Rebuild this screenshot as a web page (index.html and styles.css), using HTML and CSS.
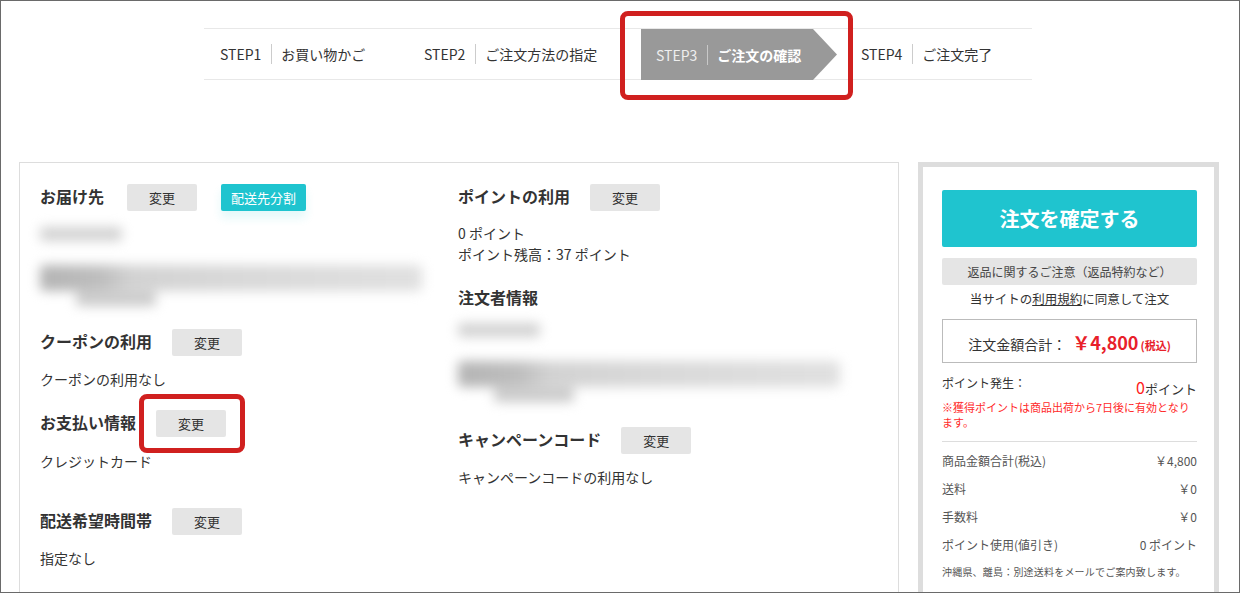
FILE: index.html
```html
<!DOCTYPE html>
<html lang="ja">
<head>
  <meta charset="UTF-8" />
  <meta name="viewport" content="width=device-width, initial-scale=1.0" />
  <title>ご注文の確認</title>
  <link rel="stylesheet" href="styles.css">
</head>
<body>
  <div class="frame">
    <!-- ステップ表示 -->
    <div class="steps">
      <div class="step step-1"><span class="step-no">STEP1</span><span class="step-name">お買い物かご</span></div>
      <div class="step step-2"><span class="step-no">STEP2</span><span class="step-name">ご注文方法の指定</span></div>
      <div class="step step-3 current"><span class="step-no">STEP3</span><span class="step-name">ご注文の確認</span></div>
      <div class="step step-4"><span class="step-no">STEP4</span><span class="step-name">ご注文完了</span></div>
      <div class="mark mark-step"></div>
    </div>

    <div class="main">
      <!-- 注文内容 -->
      <div class="order-info">
        <div class="col">
          <section class="block">
            <div class="block-head">
              <h2>お届け先</h2>
              <a href="#" class="btn-change first">変更</a>
              <a href="#" class="btn-split">配送先分割</a>
            </div>
            <div class="blurred blur-address">
              <div class="bl bl-a"></div>
              <div class="bl bl-b"></div>
              <div class="bl bl-c"></div>
            </div>
          </section>

          <section class="block coupon">
            <div class="block-head">
              <h2>クーポンの利用</h2>
              <a href="#" class="btn-change">変更</a>
            </div>
            <p class="block-text">クーポンの利用なし</p>
          </section>

          <section class="block payment">
            <div class="block-head">
              <h2>お支払い情報</h2>
              <span class="btn-wrap">
                <a href="#" class="btn-change">変更</a>
                <span class="mark mark-pay"></span>
              </span>
            </div>
            <p class="block-text">クレジットカード</p>
          </section>

          <section class="block delivery-time">
            <div class="block-head">
              <h2>配送希望時間帯</h2>
              <a href="#" class="btn-change">変更</a>
            </div>
            <p class="block-text">指定なし</p>
          </section>
        </div>

        <div class="col">
          <section class="block">
            <div class="block-head">
              <h2>ポイントの利用</h2>
              <a href="#" class="btn-change">変更</a>
            </div>
            <p class="block-text points">0 ポイント<br>ポイント残高：37 ポイント</p>
          </section>

          <section class="block orderer">
            <div class="block-head">
              <h2>注文者情報</h2>
            </div>
            <div class="blurred blur-orderer">
              <div class="bl bl-a"></div>
              <div class="bl bl-b"></div>
              <div class="bl bl-c"></div>
            </div>
          </section>

          <section class="block campaign">
            <div class="block-head">
              <h2>キャンペーンコード</h2>
              <a href="#" class="btn-change">変更</a>
            </div>
            <p class="block-text">キャンペーンコードの利用なし</p>
          </section>
        </div>
      </div>

      <!-- 注文確定 -->
      <aside class="summary">
        <a href="#" class="btn-confirm">注文を確定する</a>
        <a href="#" class="return-notice">返品に関するご注意（返品特約など）</a>
        <p class="agree">当サイトの<a href="#">利用規約</a>に同意して注文</p>
        <div class="total">
          <span class="total-label">注文金額合計：</span>
          <span class="total-price">￥4,800</span>
          <span class="total-tax">(税込)</span>
        </div>
        <div class="point-gain">
          <span>ポイント発生：</span>
          <span class="point-value"><em>0</em>ポイント</span>
        </div>
        <p class="point-note">※獲得ポイントは商品出荷から7日後に有効となります。</p>
        <dl class="breakdown">
          <div class="row"><dt>商品金額合計(税込)</dt><dd>￥4,800</dd></div>
          <div class="row"><dt>送料</dt><dd>￥0</dd></div>
          <div class="row"><dt>手数料</dt><dd>￥0</dd></div>
          <div class="row"><dt>ポイント使用(値引き)</dt><dd>0 ポイント</dd></div>
        </dl>
        <p class="island-note">沖縄県、離島：別途送料をメールでご案内致します。</p>
      </aside>
    </div>
  </div>
</body>
</html>
```

FILE: styles.css
```css
body {
  margin: 0;
  font-family: "Noto Sans CJK JP", "Noto Sans", sans-serif;
  color: #333;
  background: #fff;
}
a { color: inherit; text-decoration: none; }
p { margin: 0; }

.frame {
  width: 1240px;
  height: 593px;
  box-sizing: border-box;
  border: 1px solid #6a6a6a;
  overflow: hidden;
}

/* ステップ */
.steps {
  position: relative;
  display: flex;
  width: 828px;
  height: 50px;
  margin: 27px 0 0 203px;
  border-top: 1px solid #e8e8e8;
  border-bottom: 1px solid #e8e8e8;
}
.step {
  display: flex;
  align-items: center;
  font-size: 14px;
  box-sizing: border-box;
}
.step-no {
  padding-right: 10px;
  border-right: 1px solid #ccc;
  line-height: 20px;
}
.step-name { padding-left: 9px; }
.step-1 { width: 204px; padding-left: 16px; }
.step-2 { width: 233px; padding-left: 16px; }
.step-3 { width: 196px; padding-left: 15px; }
.step-4 { padding-left: 24px; }
.step.current {
  background: #999;
  color: #fff;
  height: 51px;
  clip-path: polygon(0 0, 172px 0, 196px 50%, 172px 100%, 0 100%);
}
.step.current .step-no { color: #eee; border-right-color: #c8c8c8; }
.step.current .step-name { font-weight: 700; }

/* 注釈の赤枠 */
.mark {
  position: absolute;
  border: 5px solid #d0201f;
  border-radius: 8px;
  box-sizing: border-box;
}
.mark-step {
  left: 416px;
  top: -18px;
  width: 233px;
  height: 89px;
}
.mark-pay {
  left: -17px;
  top: -16px;
  right: -19px;
  bottom: -16px;
}

/* メイン */
.main {
  display: flex;
  margin: 82px 0 0 18px;
}
.order-info {
  display: grid;
  grid-template-columns: 418px 1fr;
  width: 880px;
  height: 480px;
  box-sizing: border-box;
  border: 1px solid #ddd;
  padding: 21px 0 0 20px;
}
.block-head {
  display: flex;
  align-items: flex-start;
  height: 27px;
}
.block-head h2 {
  margin: 0;
  font-size: 16px;
  font-weight: 700;
  line-height: 24px;
}
.btn-change, .btn-split {
  display: inline-block;
  height: 27px;
  line-height: 27px;
  font-size: 13px;
  text-align: center;
  border-radius: 2px;
}
.btn-change {
  width: 70px;
  margin-left: 20px;
  background: #e5e5e5;
  color: #333;
}
.btn-change.first { margin-left: 23px; }
.btn-split {
  width: 85px;
  margin-left: 24px;
  background: #1fc4cf;
  color: #fff;
  box-shadow: 0 7px 10px rgba(31, 196, 207, 0.12);
}
.btn-wrap {
  position: relative;
  display: inline-block;
  margin-left: 20px;
  height: 27px;
}
.btn-wrap .btn-change { margin-left: 0; }

.block-text {
  margin-top: 13px;
  font-size: 14px;
  line-height: 20px;
}
.block-text.points {
  margin-top: 12px;
  line-height: 21px;
}
.coupon { margin-top: 14px; }
.payment { margin-top: 21px; }
.payment .block-text { margin-top: 14px; }
.delivery-time { margin-top: 37px; }
.orderer { margin-top: 20px; }
.campaign { margin-top: 16px; }

/* ぼかした個人情報 */
.blurred {
  height: 93px;
  margin-top: 11px;
  overflow: hidden;
  filter: blur(6px);
}
.blur-orderer { margin-top: 6px; }
.bl { border-radius: 4px; }
.bl-a {
  width: 82px;
  height: 14px;
  margin-top: 5px;
  background: #d2d2d2;
}
.bl-b {
  width: 382px;
  height: 26px;
  margin-top: 24px;
  background: linear-gradient(to right, #b4b4b4 0, #bebebe 16%, #d2d2d2 24%, #d8d8d8 50%, #e0e0e0 100%);
}
.bl-c {
  width: 80px;
  height: 14px;
  margin: 1px 0 0 36px;
  background: #cacaca;
}

/* 注文確定パネル */
.summary {
  width: 301px;
  height: 480px;
  margin-left: 19px;
  box-sizing: border-box;
  border: 5px solid #ddd;
  padding: 23px 17px 0 19px;
}
.btn-confirm {
  display: block;
  height: 57px;
  line-height: 57px;
  background: #1fc4cf;
  color: #fff;
  font-size: 20px;
  font-weight: 700;
  text-align: center;
  border-radius: 2px;
}
.return-notice {
  display: block;
  margin-top: 11px;
  height: 27px;
  line-height: 27px;
  background: #e5e5e5;
  color: #444;
  font-size: 12px;
  text-align: center;
  border-radius: 2px;
}
.agree {
  font-size: 12.5px;
  line-height: 28px;
  text-align: center;
}
.agree a { text-decoration: underline; }
.total {
  display: flex;
  align-items: baseline;
  justify-content: center;
  margin-top: 6px;
  height: 44px;
  box-sizing: border-box;
  border: 1px solid #bbb;
  padding-top: 9px;
}
.total-label { font-size: 14px; }
.total-price {
  margin-left: 6px;
  font-size: 18px;
  font-weight: 700;
  color: #e8202a;
}
.total-tax {
  margin-left: 2px;
  font-size: 11px;
  font-weight: 700;
  color: #e8202a;
}
.point-gain {
  display: flex;
  justify-content: space-between;
  margin-top: 11px;
  height: 22px;
  font-size: 12px;
  line-height: 18px;
}
.point-value {
  padding-top: 4px;
  font-size: 13px;
}
.point-value em {
  font-style: normal;
  font-size: 16px;
  color: #ff1a1a;
}
.point-note {
  margin-top: 4px;
  font-size: 11px;
  line-height: 15px;
  color: #ff2a2a;
}
.breakdown {
  margin: 11px 0 0;
  padding-top: 5px;
  border-top: 1px solid #ddd;
}
.breakdown .row {
  display: flex;
  justify-content: space-between;
  font-size: 12px;
  line-height: 28px;
  color: #555;
}
.breakdown dd { margin: 0; }
.island-note {
  margin-top: 3px;
  font-size: 10px;
  letter-spacing: 0.2px;
  line-height: 20px;
  color: #555;
}
```
